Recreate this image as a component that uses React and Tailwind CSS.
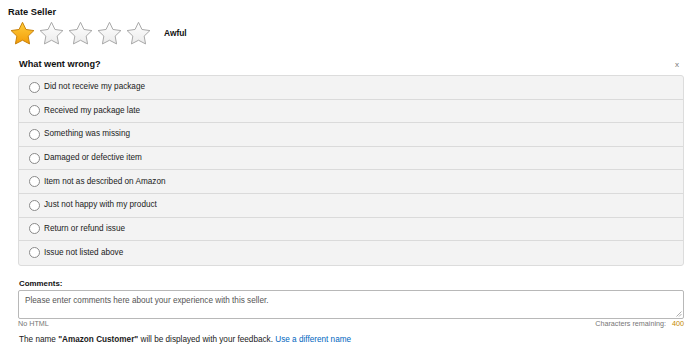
import React from 'react';

const reasons = [
  'Did not receive my package',
  'Received my package late',
  'Something was missing',
  'Damaged or defective item',
  'Item not as described on Amazon',
  'Just not happy with my product',
  'Return or refund issue',
  'Issue not listed above',
];

const Star = ({ filled, id }) => (
  <svg width="27" height="25" viewBox="0 0 24 23" className="shrink-0">
    <defs>
      <linearGradient id={id} x1="0" y1="0" x2="0" y2="1">
        {filled ? (
          <>
            <stop offset="0" stopColor="#ffce3c" />
            <stop offset="1" stopColor="#f39c07" />
          </>
        ) : (
          <>
            <stop offset="0" stopColor="#ffffff" />
            <stop offset="1" stopColor="#ebebeb" />
          </>
        )}
      </linearGradient>
    </defs>
    <path
      d="M12 1.2l3.2 6.6 7.3 1-5.3 5.1 1.3 7.2L12 17.7l-6.5 3.4 1.3-7.2L1.5 8.8l7.3-1L12 1.2z"
      fill={`url(#${id})`}
      stroke={filled ? '#c7800a' : '#a6a6a6'}
      strokeWidth="0.9"
      strokeLinejoin="round"
    />
  </svg>
);

export default function App() {
  return (
    <div className="w-[700px] h-[348px] bg-white text-[#111] font-['Liberation_Sans',Arial,sans-serif]">
      <div className="pl-2 pt-[6px] h-[18px] text-[9.3px] leading-[12px] font-bold">Rate Seller</div>

      <div className="flex items-center pl-[9px] mt-[2px] h-[26px] gap-[2px]">
        <Star filled id="s1" />
        <Star id="s2" />
        <Star id="s3" />
        <Star id="s4" />
        <Star id="s5" />
        <span className="ml-[10px] text-[8.4px] font-bold">Awful</span>
      </div>

      <div className="ml-[18px] w-[666px] mt-[13px]">
        <div className="flex items-center justify-between h-[12px] mb-[4px]">
          <span className="pl-px text-[9.2px] font-bold">What went wrong?</span>
          <span className="pr-[5px] text-[8px] text-[#777]">x</span>
        </div>

        <div className="border border-[#dcdcdc] rounded-[3px] bg-[#f3f3f3] overflow-hidden">
          {reasons.map((r, i) => (
            <div
              key={r}
              className={`flex items-center h-[23.6px] pl-[10px] ${i < reasons.length - 1 ? 'border-b border-[#dadada]' : ''}`}
            >
              <span className="w-[11px] h-[11px] rounded-full border border-[#8a8a8a] bg-white shrink-0" />
              <span className="ml-[4px] text-[8.2px] text-[#1a1a1a]">{r}</span>
            </div>
          ))}
        </div>

        <div className="mt-[12px] h-[12px] leading-[12px] text-[7.9px] font-bold pl-px">Comments:</div>
        <div className="h-[29px] border border-[#b8b8b8] rounded-[2px] pl-[6px] pt-[4px] text-[8.2px] text-[#555] relative">
          Please enter comments here about your experience with this seller.
          <svg width="6" height="6" viewBox="0 0 6 6" className="absolute right-[1px] bottom-[1px]">
            <path d="M5.5 0.5L0.5 5.5M5.5 3L3 5.5" stroke="#999" strokeWidth="0.8" />
          </svg>
        </div>
        <div className="flex justify-between items-center h-[11px] text-[7.2px] text-[#767676]">
          <span>No HTML</span>
          <span>
            Characters remaining:<span className="ml-[6px] text-[#c48a00]">400</span>
          </span>
        </div>

        <div className="mt-[4px] pl-px h-[12px] leading-[12px] text-[8.2px] text-[#1a1a1a]">
          The name <span className="font-bold">"Amazon Customer"</span> will be displayed with your feedback.{' '}
          <span className="text-[#0066c0]">Use a different name</span>
        </div>
      </div>
    </div>
  );
}
